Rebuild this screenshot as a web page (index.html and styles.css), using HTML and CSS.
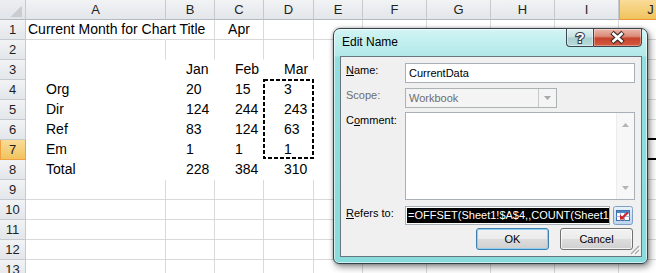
FILE: index.html
```html
<!DOCTYPE html>
<html lang="en">
<head>
    <meta charset="UTF-8">
    <meta name="viewport" content="width=device-width, initial-scale=1.0">
    <title>Edit Name</title>
    <link rel="stylesheet" href="styles.css">
</head>
<body>
    <div class="sheet">
        <table class="grid">
            <colgroup>
                <col style="width:26px"><col style="width:140px"><col style="width:49px"><col style="width:49px">
                <col style="width:50px"><col style="width:49px"><col style="width:64px"><col style="width:64px">
                <col style="width:64px"><col style="width:64px"><col style="width:64px">
            </colgroup>
            <tr class="heads">
                <th class="corner"></th><th>A</th><th>B</th><th>C</th><th>D</th><th>E</th><th>F</th><th>G</th><th>H</th><th>I</th><th class="hl">J</th>
            </tr>
            <tr>
                <th>1</th><td class="nr">Current Month for Chart Title</td><td></td><td class="c">Apr</td><td></td><td></td><td></td><td></td><td></td><td></td><td></td>
            </tr>
            <tr>
                <th>2</th><td class="nb"></td><td class="nb"></td><td class="nb"></td><td class="nb"></td><td class="nb"></td><td></td><td></td><td></td><td></td><td></td>
            </tr>
            <tr>
                <th>3</th><td class="fill"></td><td class="fill">Jan</td><td class="fill">Feb</td><td class="fill">Mar</td><td class="fill"></td><td></td><td></td><td></td><td></td><td></td>
            </tr>
            <tr>
                <th>4</th><td class="fill">Org</td><td class="fill">20</td><td class="fill">15</td><td class="fill">3</td><td class="fill"></td><td></td><td></td><td></td><td></td><td></td>
            </tr>
            <tr>
                <th>5</th><td class="fill">Dir</td><td class="fill">124</td><td class="fill">244</td><td class="fill">243</td><td class="fill"></td><td></td><td></td><td></td><td></td><td></td>
            </tr>
            <tr>
                <th>6</th><td class="fill">Ref</td><td class="fill">83</td><td class="fill">124</td><td class="fill">63</td><td class="fill"></td><td></td><td></td><td></td><td></td><td></td>
            </tr>
            <tr>
                <th class="hl">7</th><td class="fill">Em</td><td class="fill">1</td><td class="fill">1</td><td class="fill">1</td><td class="fill"></td><td></td><td></td><td></td><td></td><td></td>
            </tr>
            <tr>
                <th>8</th><td class="fill">Total</td><td class="fill">228</td><td class="fill">384</td><td class="fill">310</td><td class="fill"></td><td></td><td></td><td></td><td></td><td></td>
            </tr>
            <tr>
                <th>9</th><td></td><td></td><td></td><td></td><td></td><td></td><td></td><td></td><td></td><td></td>
            </tr>
            <tr>
                <th>10</th><td></td><td></td><td></td><td></td><td></td><td></td><td></td><td></td><td></td><td></td>
            </tr>
            <tr>
                <th>11</th><td></td><td></td><td></td><td></td><td></td><td></td><td></td><td></td><td></td><td></td>
            </tr>
            <tr>
                <th>12</th><td></td><td></td><td></td><td></td><td></td><td></td><td></td><td></td><td></td><td></td>
            </tr>
            <tr>
                <th>13</th><td></td><td></td><td></td><td></td><td></td><td></td><td></td><td></td><td></td><td></td>
            </tr>
        </table>

        <!-- copy marquee around D4:D7 -->
        <svg class="ants" width="52" height="81" viewBox="0 0 52 81">
            <rect x="1" y="1" width="49" height="78" fill="none" stroke="#000" stroke-width="2" stroke-dasharray="4 2"/>
        </svg>
        <div class="active-cell"></div>

        <!-- Edit Name dialog -->
        <div class="dlg">
            <div class="dlg-title">
                <span class="dlg-caption">Edit Name</span>
                <div class="cap-btns">
                    <div class="cap-btn help">
                        <svg width="26" height="17" viewBox="0 0 26 17">
                            <text x="13" y="14" text-anchor="middle" font-family="Liberation Sans, Arial, sans-serif" font-weight="bold" font-size="15" fill="#fff" stroke="#33404a" stroke-width="2.2" paint-order="stroke">?</text>
                        </svg>
                    </div>
                    <div class="cap-btn close">
                        <svg width="47" height="17" viewBox="0 0 47 17">
                            <path d="M18 3.5 L29 13.5 M29 3.5 L18 13.5" stroke="#3a2622" stroke-width="5"/>
                            <path d="M18.5 4 L28.5 13 M28.5 4 L18.5 13" stroke="#fff" stroke-width="2.6"/>
                        </svg>
                    </div>
                </div>
            </div>
            <div class="dlg-client">
                <div class="form">
                    <label class="lbl"><u>N</u>ame:</label>
                    <div class="field">CurrentData</div>

                    <label class="lbl off">Scope:</label>
                    <div class="field combo">
                        <span class="combo-text">Workbook</span>
                        <span class="combo-drop">
                            <svg width="9" height="5" viewBox="0 0 9 5"><path d="M1 0h7L4.5 4z" fill="#a8a8a8"/></svg>
                        </span>
                    </div>

                    <label class="lbl">C<u>o</u>mment:</label>
                    <div class="field memo">
                        <div class="vscroll">
                            <svg width="7" height="4" viewBox="0 0 7 4"><path d="M0 4h7L3.5 0z" fill="#b4b4b4"/></svg>
                            <svg width="7" height="4" viewBox="0 0 7 4"><path d="M0 0h7L3.5 4z" fill="#b4b4b4"/></svg>
                        </div>
                    </div>

                    <label class="lbl"><u>R</u>efers to:</label>
                    <div class="refers">
                        <div class="field ref"><span class="sel">=OFFSET(Sheet1!$A$4,,COUNT(Sheet1!$B$4:$M$4),4,1)</span></div>
                        <div class="collapse">
                            <svg width="20" height="19" viewBox="0 0 20 19">
                                <defs>
                                    <linearGradient id="cb" x1="0" y1="0" x2="0" y2="1">
                                        <stop offset="0" stop-color="#e9f3fc"/>
                                        <stop offset="1" stop-color="#b9d4ee"/>
                                    </linearGradient>
                                </defs>
                                <rect x=".5" y=".5" width="19" height="18" rx="2" fill="url(#cb)" stroke="#7f9fc4"/>
                                <rect x="3.5" y="4.5" width="13" height="10" fill="#fff" stroke="#3f6fae"/>
                                <rect x="4" y="5" width="12" height="2" fill="#4f86c8"/>
                                <path d="M3.5 10.5h13M7.5 7v7.5M11.5 7v7.5" stroke="#9bbbe3"/>
                                <path d="M15 6.5 L9 12" stroke="#d3232a" stroke-width="2.2"/>
                                <path d="M7 8.5 v5 h5z" fill="#d3232a"/>
                            </svg>
                        </div>
                    </div>
                </div>
                <div class="actions">
                    <button class="btn default">OK</button>
                    <button class="btn">Cancel</button>
                </div>
                <svg class="grip" width="11" height="11" viewBox="0 0 11 11">
                    <path d="M10 2 L2 10 M10 6 L6 10" stroke="#a7a7a7" stroke-width="1.2"/>
                    <path d="M11 3 L3 11 M11 7 L7 11" stroke="#fff" stroke-width="1"/>
                </svg>
            </div>
        </div>
    </div>
</body>
</html>
```

FILE: styles.css
```css
body {
    margin: 0;
    overflow: hidden;
    background: #fff;
    font-family: "Liberation Sans", Arial, sans-serif;
}
.sheet {
    position: relative;
    width: 656px;
    height: 273px;
    overflow: hidden;
}

/* worksheet */
.grid {
    border-collapse: separate;
    border-spacing: 0;
    table-layout: fixed;
    width: 683px;
    font-size: 14px;
    color: #000;
}
.grid tr {
    height: 20px;
}
.grid td {
    padding: 0 2px 1px;
    line-height: 17px;
    vertical-align: bottom;
    white-space: nowrap;
    overflow: visible;
    border-right: 1px solid #d9d9d9;
    border-bottom: 1px solid #d9d9d9;
}
.grid td.nr {
    border-right-color: transparent;
}
.grid td.nb {
    border-bottom-color: transparent;
}
.grid td.fill {
    border-color: transparent;
    padding-left: 20px;
}
.grid td.c {
    text-align: center;
}
.grid th {
    padding: 0;
    font-weight: normal;
    font-size: 13px;
    line-height: 17px;
    color: #1f1f1f;
    text-align: center;
    vertical-align: middle;
    background: linear-gradient(#f1f3f5, #e3e6ea);
    border-right: 1px solid #c5cad0;
    border-bottom: 1px solid #c5cad0;
}
.heads th {
    border-bottom-color: #b3b9c1;
}
.grid th.corner {
    background:
        linear-gradient(to bottom right, transparent 50%, #c9cdd2 50%) right 3px bottom 2px / 11px 11px no-repeat,
        linear-gradient(#eceef1, #e1e4e8);
}
.grid th.hl {
    background: linear-gradient(#f9dc98, #f1c35e);
    border-color: #f0a040;
    box-shadow: inset 1px 0 #f0a040;
}
.heads th.hl {
    border-bottom: 1px solid #f29436;
}

.ants {
    position: absolute;
    left: 263px;
    top: 79px;
}
.active-cell {
    position: absolute;
    left: 617px;
    top: 138px;
    width: 66px;
    height: 18px;
    border: 2px solid #000;
}

/* dialog */
.dlg {
    position: absolute;
    left: 333px;
    top: 28px;
    width: 315px;
    height: 236px;
    box-sizing: border-box;
    display: flex;
    flex-direction: column;
    border: 1px solid #34424c;
    border-radius: 7px 7px 6px 6px;
    background: linear-gradient(180deg, #d3f4f4 0, #c0eeee 14px, #b2e9e9 27px, #93dede 28px, #8adbdb 100%);
    box-shadow: inset 0 0 0 1px rgba(255, 255, 255, 0.6), 2px 3px 7px rgba(0, 0, 0, 0.45), 0 0 3px rgba(0, 0, 0, 0.3);
    font-size: 11px;
    color: #000;
}
.dlg-title {
    flex: none;
    height: 27px;
    display: flex;
    align-items: flex-start;
}
.dlg-caption {
    flex: 1;
    padding: 6px 0 0 8px;
    font-size: 12px;
    line-height: 14px;
}
.cap-btns {
    display: flex;
    margin: -1px 5px 0 0;
}
.cap-btn {
    height: 19px;
    box-sizing: border-box;
    border: 1px solid #3b4650;
    display: flex;
    align-items: center;
    justify-content: center;
}
.help {
    width: 27px;
    border-right: none;
    border-radius: 0 0 0 4px;
    background: linear-gradient(180deg, #e2f2f2 0, #c6e2e2 45%, #a9cfcf 55%, #b6dcdc 100%);
    box-shadow: inset 0 0 0 1px rgba(255, 255, 255, 0.45);
}
.close {
    width: 49px;
    border-radius: 0 0 4px 0;
    background: linear-gradient(180deg, #ebb7aa 0, #dc8c7a 42%, #c8432c 55%, #d35c42 100%);
    box-shadow: inset 0 0 0 1px rgba(255, 255, 255, 0.35);
}
.dlg-client {
    flex: 1;
    min-width: 0;
    position: relative;
    margin: 0 5px 6px 6px;
    padding: 6px 6px 0 5px;
    border: 1px solid #687680;
    background: #f0f0f0;
    display: flex;
    flex-direction: column;
}
.form {
    display: grid;
    grid-template-columns: 59px minmax(0, 1fr);
    grid-template-rows: 20px 20px 88px 19px;
    row-gap: 5px;
}
.lbl {
    align-self: start;
    line-height: 14px;
}
.lbl.off {
    color: #6d6d6d;
}
.field {
    box-sizing: border-box;
    min-width: 0;
    height: 100%;
    border: 1px solid #a9afb8;
    background: #fff;
    padding: 0 3px;
    line-height: 18px;
    white-space: nowrap;
    overflow: hidden;
}
.combo {
    width: 152px;
    padding: 0 0 0 3px;
    display: flex;
    background: #f4f4f4;
    border-color: #adb2b5;
    color: #6d6d6d;
}
.combo-text {
    flex: 1;
    line-height: 18px;
}
.combo-drop {
    width: 17px;
    border-left: 1px solid #c9c9c9;
    display: flex;
    align-items: center;
    justify-content: center;
}
.memo {
    margin-top: -1px;
    height: 88px;
    padding: 0;
    display: flex;
    justify-content: flex-end;
}
.vscroll {
    width: 17px;
    background: #f7f7f7;
    border-left: 1px solid #ececec;
    display: flex;
    flex-direction: column;
    justify-content: space-between;
    align-items: center;
    padding: 10px 0 9px;
}
.refers {
    display: flex;
    min-width: 0;
    gap: 3px;
    margin-right: 2px;
}
.ref {
    flex: 1;
    padding: 1px 1px;
    line-height: 15px;
}
.sel {
    display: inline-block;
    background: #000;
    color: #fff;
    padding-left: 1px;
}
.collapse {
    flex: none;
    width: 20px;
    height: 19px;
}
.actions {
    display: flex;
    justify-content: flex-end;
    gap: 11px;
    margin: 3px 2px 0 0;
}
.btn {
    width: 73px;
    height: 22px;
    padding: 0;
    border: 1px solid #707070;
    border-radius: 3px;
    background: linear-gradient(#f2f2f2 0, #ebebeb 50%, #dddddd 50%, #cfcfcf 100%);
    box-shadow: inset 0 0 0 1px rgba(255, 255, 255, 0.75);
    font-family: "Liberation Sans", Arial, sans-serif;
    font-size: 11px;
    color: #000;
}
.btn.default {
    border-color: #3c7fb1;
    box-shadow: inset 0 0 0 1px #8fd0f2;
}
.grip {
    position: absolute;
    right: 1px;
    bottom: 1px;
}
```
